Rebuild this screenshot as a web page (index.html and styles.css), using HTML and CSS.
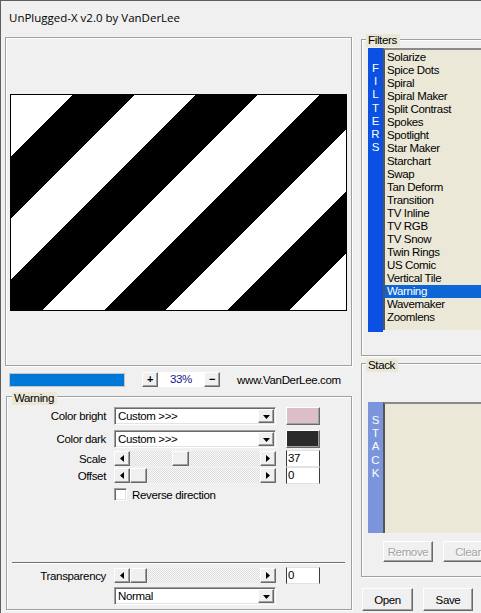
FILE: index.html
```html
<!DOCTYPE html>
<html>
<head>
<meta charset="utf-8">
<link rel="stylesheet" href="styles.css">
</head>
<body>
<div class="win">
  <div class="titlebar">UnPlugged-X v2.0 by VanDerLee</div>
  <div class="main">
    <div class="left">
      <div class="preview"><div class="img"></div></div>
      <div class="zoomrow">
        <div class="progress"></div>
        <div class="raised zbtn plus">+</div>
        <div class="zval">33%</div>
        <div class="raised zbtn">−</div>
        <div class="url">www.VanDerLee.com</div>
      </div>
      <div class="group warning">
        <div class="glabel wl">Warning</div>
        <div class="row r1">
          <div class="lbl">Color bright</div>
          <div class="ctl combo"><span class="ctext">Custom &gt;&gt;&gt;</span><div class="raised cbtn"><svg width="7" height="4" viewBox="0 0 7 4"><polygon points="0,0 7,0 3.5,4" fill="#000"/></svg></div></div>
          <div class="fld raised swatch pink"></div>
        </div>
        <div class="row r2">
          <div class="lbl">Color dark</div>
          <div class="ctl combo"><span class="ctext">Custom &gt;&gt;&gt;</span><div class="raised cbtn"><svg width="7" height="4" viewBox="0 0 7 4"><polygon points="0,0 7,0 3.5,4" fill="#000"/></svg></div></div>
          <div class="fld raised swatch dark"></div>
        </div>
        <div class="row r3">
          <div class="lbl">Scale</div>
          <div class="ctl scroll">
            <div class="raised sbtn"><svg width="4" height="7" viewBox="0 0 4 7"><polygon points="4,0 4,7 0,3.5" fill="#000"/></svg></div>
            <div class="track"><div class="raised thumb" style="margin-left:42px"></div></div>
            <div class="raised sbtn"><svg width="4" height="7" viewBox="0 0 4 7"><polygon points="0,0 0,7 4,3.5" fill="#000"/></svg></div>
          </div>
          <div class="fld edit">37</div>
        </div>
        <div class="row r4">
          <div class="lbl">Offset</div>
          <div class="ctl scroll">
            <div class="raised sbtn"><svg width="4" height="7" viewBox="0 0 4 7"><polygon points="4,0 4,7 0,3.5" fill="#000"/></svg></div>
            <div class="track"><div class="raised thumb" style="margin-left:0px"></div></div>
            <div class="raised sbtn"><svg width="4" height="7" viewBox="0 0 4 7"><polygon points="0,0 0,7 4,3.5" fill="#000"/></svg></div>
          </div>
          <div class="fld edit">0</div>
        </div>
        <div class="row r5">
          <div class="lbl"></div>
          <div class="ctl check"><div class="box"></div><span>Reverse direction</span></div>
        </div>
        <div class="sep"></div>
        <div class="row r6">
          <div class="lbl">Transparency</div>
          <div class="ctl scroll">
            <div class="raised sbtn"><svg width="4" height="7" viewBox="0 0 4 7"><polygon points="4,0 4,7 0,3.5" fill="#000"/></svg></div>
            <div class="track"><div class="raised thumb" style="margin-left:0px"></div></div>
            <div class="raised sbtn"><svg width="4" height="7" viewBox="0 0 4 7"><polygon points="0,0 0,7 4,3.5" fill="#000"/></svg></div>
          </div>
          <div class="fld edit">0</div>
        </div>
        <div class="row r7">
          <div class="lbl"></div>
          <div class="ctl combo"><span class="ctext">Normal</span><div class="raised cbtn"><svg width="7" height="4" viewBox="0 0 7 4"><polygon points="0,0 7,0 3.5,4" fill="#000"/></svg></div></div>
        </div>
      </div>
    </div>
    <div class="right">
      <div class="group filters">
        <div class="glabel fl">Filters</div>
        <div class="listwrap fwrap">
          <div class="vbar fbar"><span>F</span><span>I</span><span>L</span><span>T</span><span>E</span><span>R</span><span>S</span></div>
          <div class="list flist">
            <div class="item">Solarize</div>
            <div class="item">Spice Dots</div>
            <div class="item">Spiral</div>
            <div class="item">Spiral Maker</div>
            <div class="item">Split Contrast</div>
            <div class="item">Spokes</div>
            <div class="item">Spotlight</div>
            <div class="item">Star Maker</div>
            <div class="item">Starchart</div>
            <div class="item">Swap</div>
            <div class="item">Tan Deform</div>
            <div class="item">Transition</div>
            <div class="item">TV Inline</div>
            <div class="item">TV RGB</div>
            <div class="item">TV Snow</div>
            <div class="item">Twin Rings</div>
            <div class="item">US Comic</div>
            <div class="item">Vertical Tile</div>
            <div class="item sel">Warning</div>
            <div class="item">Wavemaker</div>
            <div class="item">Zoomlens</div>
          </div>
        </div>
      </div>
      <div class="group stack">
        <div class="glabel sl">Stack</div>
        <div class="listwrap swrap">
          <div class="vbar sbar"><span>S</span><span>T</span><span>A</span><span>C</span><span>K</span></div>
          <div class="list slist"></div>
        </div>
        <div class="btnrow">
          <div class="raised pbtn disabled">Remove</div>
          <div class="raised pbtn disabled clear">Clear</div>
        </div>
      </div>
      <div class="btnrow bottom">
        <div class="raised pbtn open">Open</div>
        <div class="raised pbtn save">Save</div>
      </div>
    </div>
  </div>
</div>
</body>
</html>
```
FILE: styles.css
```css
* { box-sizing: border-box; }
html, body { margin: 0; padding: 0; }
body {
  background: #f0f0f0;
  font-family: "Liberation Sans", Arial, sans-serif;
  font-size: 11px;
  letter-spacing: -0.35px;
  color: #000;
}
.win {
  width: 481px;
  height: 613px;
  overflow: hidden;
  border-top: 1px solid #5f5f5f;
  border-left: 1px solid #5f5f5f;
  background: #f0f0f0;
}
.titlebar {
  height: 36px;
  padding-left: 8px;
  line-height: 33px;
  font-family: "Open Sans", "Noto Sans", sans-serif;
  font-size: 11.5px;
  letter-spacing: 0;
}
.main { display: flex; align-items: flex-start; }
.left { flex: none; margin-left: 4px; width: 347px; display: flex; flex-direction: column; }
.right { flex: none; margin-left: 9px; width: 130px; display: flex; flex-direction: column; }

.raised {
  background: #f0f0f0;
  border: 1px solid;
  border-color: #ffffff #696969 #696969 #ffffff;
  box-shadow: inset -1px -1px 0 #a0a0a0;
}
.group {
  position: relative;
  border: 1px solid #a0a0a0;
  box-shadow: 1px 1px 0 #fff, inset 1px 1px 0 #fff;
}
.glabel {
  position: absolute;
  background: #ebe7d7;
  line-height: 13px;
  height: 13px;
  padding: 0 3px 0 2px;
  font-size: 11.5px;
}

/* preview */
.preview {
  height: 329px;
  border: 1px solid #a0a0a0;
  box-shadow: 1px 1px 0 #fff, inset 1px 1px 0 #fff;
  display: flex;
  justify-content: center;
  align-items: flex-start;
  padding-top: 56px;
}
.img {
  width: 337px;
  height: 217px;
  border: 1px solid #000;
  background: repeating-linear-gradient(135deg, #fff 0 43.6px, #000 43.6px 87.2px);
}

/* zoom row */
.zoomrow { display: flex; align-items: center; height: 15px; margin-top: 6px; }
.progress { margin-left: 4px; width: 116px; height: 14px; border: 1px solid #c4c4c4; background: #0078d7; }
.zbtn { width: 16px; height: 15px; display: flex; align-items: center; justify-content: center; font-weight: bold; font-size: 11px; line-height: 13px; }
.plus { margin-left: 17px; }
.zval { width: 46px; height: 15px; background: #fff; color: #14148c; text-align: center; line-height: 15px; font-size: 11.5px; }
.url { margin-left: 17px; font-size: 11.5px; }

/* warning group */
.warning { margin-top: 9px; margin-left: 1px; width: 346px; height: 214px; padding-top: 10px; }
.wl { top: -5px; left: 5px; }
.row { display: flex; align-items: center; }
.lbl { flex: none; width: 99px; text-align: right; font-size: 11.5px; }
.ctl { flex: none; margin-left: 8px; width: 162px; }
.fld { flex: none; margin-left: 10px; width: 34px; }
.r1 { height: 18px; }
.r2 { height: 18px; margin-top: 5px; }
.r3 { height: 17px; margin-top: 2px; }
.r4 { height: 17px; }
.r5 { height: 13px; margin-top: 4px; }
.r6 { height: 17px; margin-top: 3px; }
.r7 { height: 18px; margin-top: 3px; }
.sep { margin-top: 61px; margin-left: 5px; width: 333px; height: 2px; border-top: 1px solid #6e6e6e; border-bottom: 1px solid #fff; }

.combo {
  height: 18px;
  background: #fff;
  border: 1px solid;
  border-color: #a0a0a0 #fff #fff #a0a0a0;
  box-shadow: inset 1px 1px 0 #696969, inset -1px -1px 0 #e3e3e3;
  display: flex;
  align-items: center;
  padding: 1px;
}
.ctext { flex: 1; padding-left: 2px; font-size: 11.5px; line-height: 14px; }
.cbtn { width: 16px; height: 14px; display: flex; align-items: center; justify-content: center; }
.cbtn svg { margin-top: 1px; }
.swatch { height: 18px; }
.pink { background: #dcbec6; }
.dark { background: #2b2b2b; }

.scroll { height: 15px; display: flex; }
.sbtn { flex: none; width: 16px; height: 15px; display: flex; align-items: center; justify-content: center; }
.track {
  flex: 1;
  height: 15px;
  background: repeating-conic-gradient(#f8f8f8 0 25%, #dedede 0 50%) 0 0 / 2px 2px;
  display: flex;
}
.thumb { width: 17px; height: 15px; }
.edit {
  height: 17px;
  background: #fff;
  border: 1px solid #e2e2e2;
  border-left-color: #3c3c3c;
  border-right-color: #3c3c3c;
  padding-left: 1px;
  line-height: 15px;
  font-size: 11.5px;
}
.check { display: flex; align-items: center; }
.box {
  width: 13px; height: 13px; background: #fff;
  border: 1px solid; border-color: #a0a0a0 #fff #fff #a0a0a0;
  box-shadow: inset 1px 1px 0 #696969, inset -1px -1px 0 #e3e3e3;
}
.check span { margin-left: 5px; font-size: 11.5px; }

/* right column */
.filters { margin-top: 2px; height: 317px; }
.fl { top: -6px; left: 4px; }
.listwrap { display: flex; margin-left: 6px; }
.fwrap { margin-top: 8px; height: 284px; }
.vbar { flex: none; width: 15px; color: #fff; display: flex; flex-direction: column; align-items: center; font-size: 11.5px; letter-spacing: 0; }
.vbar span { height: 13.2px; line-height: 13.2px; }
.fbar { background: #0a50e2; padding-top: 14px; }
.list {
  flex: 1;
  background: #ebe8d8;
  border-top: 2px solid #8a8a8a;
  border-left: 2px solid #555;
  padding-top: 1px;
}
.flist { height: 282px; }
.item { height: 13px; line-height: 13px; padding-left: 2px; font-size: 11.5px; white-space: nowrap; }
.item.sel { background: #0d66d6; color: #fff; }

.stack { margin-top: 7px; height: 214px; }
.sl { top: -5px; left: 4px; }
.swrap { margin-top: 38px; height: 131px; }
.sbar { background: #7a95dc; padding-top: 12px; }
.slist { height: 131px; }
.btnrow { display: flex; }
.stack .btnrow { margin-top: 8px; margin-left: 21px; }
.pbtn { flex: none; width: 50px; height: 21px; display: flex; align-items: center; justify-content: center; font-size: 11.5px; }
.disabled { color: #a3a3a3; text-shadow: 1px 1px 0 #fff; }
.clear { margin-left: 10px; }
.bottom { margin-top: 11px; margin-left: 1px; }
.open, .save { width: 51px; height: 23px; }
.save { margin-left: 10px; width: 50px; }
```
